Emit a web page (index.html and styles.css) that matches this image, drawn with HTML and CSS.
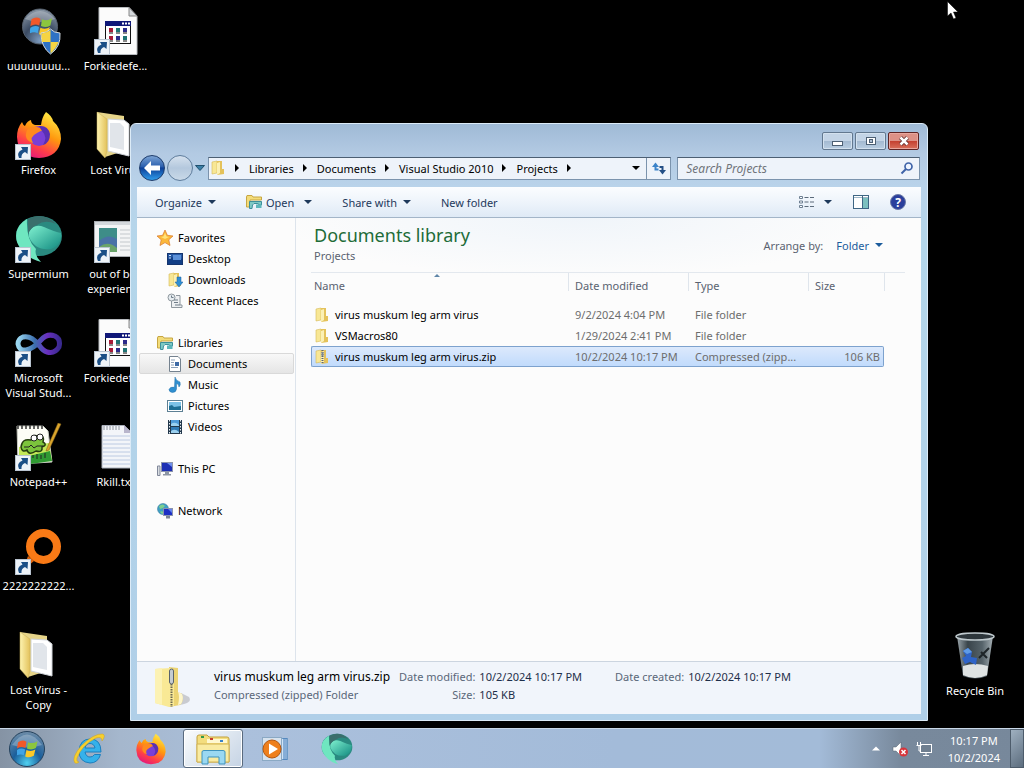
FILE: index.html
```html
<!DOCTYPE html>
<html lang="en">
<head>
    <meta charset="UTF-8">
    <meta name="viewport" content="width=device-width, initial-scale=1.0">
    <title>Documents library</title>
    <link rel="stylesheet" href="styles.css">
</head>
<body>
    <!-- shared icons -->
    <svg class="defs" width="0" height="0" aria-hidden="true">
        <defs>
            <linearGradient id="gFolder" x1="0" y1="0" x2="1" y2="0">
                <stop offset="0" stop-color="#fdf3b0"/>
                <stop offset="1" stop-color="#e3c25c"/>
            </linearGradient>
            <linearGradient id="gFox" x1="0.8" y1="0" x2="0.3" y2="1">
                <stop offset="0" stop-color="#fff14a"/>
                <stop offset="0.45" stop-color="#ff980e"/>
                <stop offset="0.75" stop-color="#ff3f48"/>
                <stop offset="1" stop-color="#e3167e"/>
            </linearGradient>
            <radialGradient id="gOrb" cx="0.5" cy="0.9" r="0.9">
                <stop offset="0" stop-color="#4fd0f0"/>
                <stop offset="0.45" stop-color="#1a5f9c"/>
                <stop offset="1" stop-color="#6f8da8"/>
            </radialGradient>
            <radialGradient id="gOrbGrey" cx="0.5" cy="0.9" r="0.9">
                <stop offset="0" stop-color="#7d9cc0"/>
                <stop offset="0.5" stop-color="#3a4a62"/>
                <stop offset="1" stop-color="#8b98a6"/>
            </radialGradient>
            <linearGradient id="gTeal" x1="0" y1="0" x2="1" y2="1">
                <stop offset="0" stop-color="#7ff0cf"/>
                <stop offset="1" stop-color="#128a80"/>
            </linearGradient>
            <linearGradient id="gInf" x1="0" y1="0" x2="1" y2="0">
                <stop offset="0" stop-color="#9ad7f0"/>
                <stop offset="0.4" stop-color="#3c6fae"/>
                <stop offset="0.7" stop-color="#6a2fc0"/>
                <stop offset="1" stop-color="#3a2a90"/>
            </linearGradient>
            <linearGradient id="gBin" x1="0" y1="0" x2="1" y2="0">
                <stop offset="0" stop-color="#9aa5ab"/>
                <stop offset="0.3" stop-color="#39444a"/>
                <stop offset="0.7" stop-color="#56636a"/>
                <stop offset="1" stop-color="#a6b0b5"/>
            </linearGradient>
        </defs>
        <symbol id="i-flag" viewBox="0 0 20 18">
            <path d="M1 3 Q5 0 9 2.500 L8 8.500 Q4 6.500 0 9Z" fill="#f0582a"/>
            <path d="M10.500 3 Q15 5 19.500 2 L18 8.500 Q14 11 9.500 9Z" fill="#8cc63e"/>
            <path d="M0 10.500 Q4 8 7.800 10 L6.500 15.500 Q3 13.500 -1 16Z" fill="#3fa4e6"/>
            <path d="M9 10.500 Q13.500 12.500 17.500 10 L16 16 Q12 18.500 7.800 16.500Z" fill="#fbc927"/>
        </symbol>
        <symbol id="i-shortcut" viewBox="0 0 16 16">
            <rect x="0.500" y="0.500" width="15" height="15" fill="#eef3f8" stroke="#b9c4d0"/>
            <path d="M4 14 Q1 8 7.500 5.500 L6 3 L13 3 L12.500 10 L10 8 Q6 9.500 6.500 14Z" fill="#1b4f86"/>
        </symbol>
        <symbol id="i-uac" viewBox="0 0 48 48">
            <circle cx="25" cy="19.500" r="17.500" fill="url(#gOrbGrey)" stroke="#56616e"/>
            <path d="M10 12 Q25 -4 40 12 Q25 18 10 12Z" fill="#fff" opacity="0.250"/>
            <use href="#i-flag" x="15" y="9" width="23" height="20"/>
            <path d="M26 26 Q32 26 35.500 22 Q39 26 45 26 Q46 40 35.500 47 Q26 40 26 26Z" fill="#2f72c4" stroke="#d5dce2"/>
            <path d="M35.500 23 V35 H27 Q26 30 26.500 26.500 Q32 26 35.500 23Z M35.500 35 H43.500 Q41 42 35.500 46.500Z" fill="#f6d443"/>
        </symbol>
        <symbol id="i-batch" viewBox="0 0 48 48">
            <path d="M7 0.500 H37 L45 9 V47.500 H7Z" fill="#fbfbfb" stroke="#b9bcc0"/>
            <path d="M37 0.500 V9 H45Z" fill="#d5d9dd" stroke="#888"/>
            <rect x="13.500" y="14.500" width="25" height="22" fill="#fff" stroke="#111"/>
            <rect x="13" y="14" width="26" height="5" fill="#101878"/>
            <path d="M30 15.500h2v2h-2zM33 15.500h2v2h-2zM36 15.500h2v2h-2z" fill="#fff"/>
            <path d="M17 21h4v4h-4zM17 29h4v4h-4z" fill="#a81c38"/>
            <path d="M24 21h4v4h-4zM31 29h4v4h-4z" fill="#1f7474"/>
            <path d="M31 21h4v4h-4zM24 29h4v4h-4z" fill="#2b2b8a"/>
            <path d="M17 26h4M24 26h4M31 26h4M17 34h4M24 34h4M31 34h4" stroke="#111"/>
        </symbol>
        <symbol id="i-firefox" viewBox="0 0 48 48">
            <path d="M31 1 Q37 5 38 10 Q46 17 46 28 Q44 46 24 47 Q3 46 2 26 Q2 17 7 11 Q8 14 10 15 Q12 10 16 9 Q16 13 20 14 L26 14 Q27 6 31 1Z" fill="url(#gFox)"/>
            <circle cx="24" cy="25" r="10" fill="#7a3fd6"/>
            <path d="M12 19 Q17 13 25 17 L29 19 Q25 20 22 22 Q14 26 18 32 Q8 29 12 19Z" fill="#ff8a1e"/>
            <path d="M24 15 Q33 14 35 23 Q35 32 28 34 Q33 26 27 20Z" fill="#5a2fb4"/>
        </symbol>
        <symbol id="i-openfolder" viewBox="0 0 48 48">
            <path d="M5 1 L32 5 V40 L13 46Z" fill="#e6d489"/>
            <path d="M16 8 L32 9 L37 13 V45 L16 40Z" fill="#fff" stroke="#cfd3d8"/>
            <path d="M18 12 L28 12 L32 16 V39 L18 36Z" fill="#e1e5ea"/>
            <path d="M5 1 L15 8 V40 L13 47 L5 38Z" fill="url(#gFolder)" stroke="#c9b158" stroke-width="0.500"/>
        </symbol>
        <symbol id="i-teal" viewBox="0 0 48 48">
            <ellipse cx="24" cy="21" rx="23" ry="20" fill="#2a8a80"/>
            <path d="M12 4 Q-2 12 2 27 Q8 42 26 47 Q19 40 21 34 Q11 25 12 4Z" fill="#6fe6c0"/>
            <path d="M14 17 Q19 8 29 12 Q40 17 46 18 Q47 30 36 34 Q20 36 14 22Z" fill="url(#gTeal)"/>
            <path d="M13 4 Q28 -4 41 9 Q30 4 22 10 Q16 12 13 19Z" fill="#3a6e6c"/>
        </symbol>
        <symbol id="i-oobe" viewBox="0 0 48 48">
            <rect x="2.500" y="6.500" width="44" height="35" fill="#f3f4f5" stroke="#a9adb2"/>
            <rect x="3" y="7" width="43" height="3" fill="#d4d8dc"/>
            <rect x="7" y="13" width="18" height="24" fill="#3e8d88"/>
            <path d="M7 26 Q16 18 25 24 V37 H7Z" fill="#4a72a6"/>
            <path d="M7 32 Q16 25 25 33 V37 H7Z" fill="#6aa36a"/>
            <path d="M28 15h16M28 19h16M28 23h16M28 27h16M28 31h16M28 35h16" stroke="#c3c8cc"/>
        </symbol>
        <symbol id="i-infinity" viewBox="0 0 48 48">
            <path d="M24 26 Q16 16 8 18 Q3 20 3 25 Q4 32 11 31 Q18 30 26 21 Q32 14 40 17 Q46 20 44 28 Q40 35 32 33 Q28 32 24 26Z" fill="none" stroke="url(#gInf)" stroke-width="5"/>
        </symbol>
        <symbol id="i-npp" viewBox="0 0 48 48">
            <path d="M2 3 L28 3 L33 8 L37 39 L3 41Z" fill="#fdfdf6" stroke="#c9ccc2"/>
            <path d="M4 24 L34 20 L37 38 L4 40Z" fill="#c4e858"/>
            <path d="M14 33 L35 28 L37 38 L15 41Z" fill="#2f9a32"/>
            <path d="M3 2v4M7 2v4M11 2v4M15 2v4M19 2v4M23 2v4M27 2v4" stroke="#333" stroke-width="1.500"/>
            <path d="M6 24 Q7 15 16 17 Q19 10 24 14 Q30 12 28 19 Q33 22 27 24 Q28 30 21 28 Q14 33 12 27 Q7 30 6 24Z" fill="#7cc43c" stroke="#253c10" stroke-width="1.500"/>
            <circle cx="19" cy="15" r="3" fill="#fff" stroke="#222"/>
            <circle cx="25" cy="14" r="3" fill="#fff" stroke="#222"/>
            <path d="M9 24h5l2-2 3 3 3-2h6M18 35v-3M22 36v-5M26 36v-4M30 35v-5" stroke="#222" fill="none"/>
            <path d="M43 0 L46 1 L34 27 L31 28 L32 25Z" fill="#d9a42c" stroke="#7a5a18" stroke-width="0.500"/>
        </symbol>
        <symbol id="i-text" viewBox="0 0 48 48">
            <path d="M10 2.500 H32 L40 10 V45 H10Z" fill="#f3f5f9" stroke="#aab0bb"/>
            <path d="M32 2 V10 H40Z" fill="#b9b6cc"/>
            <path d="M12 3v4M15 3v4M18 3v4M21 3v4M24 3v4M27 3v4" stroke="#8c929c"/>
            <path d="M11 13h28M11 17h28M11 21h28M11 25h28M11 29h28M11 33h28M11 37h28M11 41h28" stroke="#bccae2"/>
        </symbol>
        <symbol id="i-openshell" viewBox="0 0 48 48">
            <path d="M13 29 L19 34 L8 43Z" fill="#e0640e"/>
            <circle cx="28.500" cy="19.500" r="13.500" fill="none" stroke="#f97a16" stroke-width="8"/>
        </symbol>
        <symbol id="i-bin" viewBox="0 0 48 48">
            <path d="M6 4 H42 L36 44 Q24 49 12 44Z" fill="url(#gBin)"/>
            <path d="M12 34 Q24 30 37 34 L36 43 Q24 49 12 43Z" fill="#dfe3e3"/>
            <path d="M12 19 L17 16 L21 20 L20 25 L26 26 L25 33 L19 30 L14 32 L11 26 L15 24Z" fill="#2f64c8"/>
            <path d="M12 19 L17 16 L21 20 L16 22Z" fill="#5f9be6"/>
            <path d="M38 16 L28 26 M30 20 L36 26" stroke="#1d2428" stroke-width="2"/>
            <ellipse cx="24" cy="4.500" rx="19" ry="3.500" fill="#2d363b" stroke="#bfc9cd" stroke-width="1.500"/>
        </symbol>
        <symbol id="i-folder" viewBox="0 0 16 16">
            <path d="M2 2 L7 1 V13 L2 14Z" fill="#f8e795" stroke="#d5b855" stroke-width="0.600"/>
            <path d="M7 1 H12 V9 H14 V14 L7 15Z" fill="#e4c25b"/>
            <path d="M7 3 L10 2 V13 L7 15Z" fill="#fbf0b4"/>
        </symbol>
        <symbol id="i-zip" viewBox="0 0 16 16">
            <use href="#i-folder"/>
            <path d="M8.500 1V15" stroke="#5c6670" stroke-width="2" stroke-dasharray="1 1"/>
            <rect x="7.500" y="3" width="2" height="4" fill="#7d8790"/>
        </symbol>
        <symbol id="i-library" viewBox="0 0 16 16">
            <path d="M0.500 3 V13 H4 V6 H15.500 V3 H7 L6 1.500 H1Z" fill="#f3dc7a" stroke="#c7a642"/>
            <path d="M3.500 7.500 H15.500 V11 H13 Q13 9.500 11 9.500 H8 Q6 10 6 14.500 H3.500Z" fill="#7ec9c4" stroke="#3d8f9b"/>
            <path d="M10 10.500h5.500v3.500h-5.500z" fill="#5db6bb"/>
        </symbol>
        <symbol id="i-monitor" viewBox="0 0 16 16">
            <rect x="4.500" y="1.500" width="11" height="9" fill="#1c2fb4" stroke="#8b93ad"/>
            <path d="M10 2 H15 V6Z" fill="#7090ec"/>
            <path d="M8 11h4v2h2v1.500H6V13h2z" fill="#8d96a4"/>
            <path d="M0.500 5 H3 V14.500 H0.500Z" fill="#d9dde2" stroke="#81889a"/>
        </symbol>
    </svg>

    <main class="desktop">
        <nav class="shortcuts" aria-label="Desktop">
            <a class="shortcut" href="#"><svg class="pic"><use href="#i-uac"/></svg><span>uuuuuuuu...</span></a>
            <a class="shortcut" href="#"><svg class="pic"><use href="#i-firefox"/><use href="#i-shortcut" x="0" y="33" width="16" height="16"/></svg><span>Firefox</span></a>
            <a class="shortcut" href="#"><svg class="pic"><use href="#i-teal"/><use href="#i-shortcut" x="0" y="32" width="16" height="16"/></svg><span>Supermium</span></a>
            <a class="shortcut" href="#"><svg class="pic"><use href="#i-infinity"/><use href="#i-shortcut" x="0" y="32" width="16" height="16"/></svg><span>Microsoft Visual Stud...</span></a>
            <a class="shortcut" href="#"><svg class="pic"><use href="#i-npp"/><use href="#i-shortcut" x="0" y="32" width="16" height="16"/></svg><span>Notepad++</span></a>
            <a class="shortcut" href="#"><svg class="pic"><use href="#i-openshell"/><use href="#i-shortcut" x="0" y="32" width="16" height="16"/></svg><span>2222222222...</span></a>
            <a class="shortcut" href="#"><svg class="pic"><use href="#i-openfolder"/></svg><span>Lost Virus - Copy</span></a>
            <a class="shortcut" href="#"><svg class="pic"><use href="#i-batch"/><use href="#i-shortcut" x="2" y="32" width="16" height="16"/></svg><span>Forkiedefe...</span></a>
            <a class="shortcut" href="#"><svg class="pic"><use href="#i-openfolder"/></svg><span>Lost Virus</span></a>
            <a class="shortcut" href="#"><svg class="pic"><use href="#i-oobe"/><use href="#i-shortcut" x="2" y="32" width="16" height="16"/></svg><span>out of box experience</span></a>
            <a class="shortcut" href="#"><svg class="pic"><use href="#i-batch"/><use href="#i-shortcut" x="2" y="32" width="16" height="16"/></svg><span>Forkiedefe...</span></a>
            <a class="shortcut" href="#"><svg class="pic"><use href="#i-text"/></svg><span>Rkill.txt</span></a>
        </nav>
        <a class="shortcut recycle" href="#"><svg class="pic"><use href="#i-bin"/></svg><span>Recycle Bin</span></a>

        <section class="window" aria-label="Projects">
            <header class="caption">
                <button class="cap" aria-label="Minimize"><svg width="14" height="12"><rect x="1.500" y="6.500" width="10" height="4" fill="#fff" stroke="#4d6074"/></svg></button>
                <button class="cap" aria-label="Maximize"><svg width="14" height="12"><rect x="2.500" y="2.500" width="9" height="7" fill="#fff" stroke="#4d6074"/><rect x="5.500" y="4.500" width="3" height="3" fill="#aebfd2" stroke="#4d6074"/></svg></button>
                <button class="cap close" aria-label="Close"><svg width="14" height="12"><path d="M3.500 2.500 L10.500 9.500 M10.500 2.500 L3.500 9.500" stroke="#5b2a2a" stroke-width="4"/><path d="M3.500 2.500 L10.500 9.500 M10.500 2.500 L3.500 9.500" stroke="#fff" stroke-width="2.500"/></svg></button>
            </header>

            <div class="navbar">
                <div class="history">
                    <button class="round back" aria-label="Back"><svg width="16" height="14"><path d="M0 7 L7 0 V4.500 H16 V9.500 H7 V14Z" fill="#fff"/></svg></button>
                    <button class="round forward" aria-label="Forward"></button>
                    <button class="recent" aria-label="Recent pages"><svg width="10" height="6"><path d="M0.500 0.500H9.500L5 5.500Z" fill="#3b7fa6" stroke="#20506f"/></svg></button>
                </div>
                <div class="address">
                    <svg class="small"><use href="#i-folder"/></svg>
                    <i class="chev"></i><button>Libraries</button>
                    <i class="chev"></i><button>Documents</button>
                    <i class="chev"></i><button>Visual Studio 2010</button>
                    <i class="chev"></i><button>Projects</button>
                    <i class="chev"></i>
                    <button class="drop" aria-label="Previous locations"><i class="caret"></i></button>
                    <button class="refresh" aria-label="Refresh"><svg width="14" height="14"><path d="M3.500 5 V8.500 H6.500" fill="none" stroke="#3b83c9" stroke-width="2"/><path d="M0 6 L3.500 1.500 L7 6Z" fill="#3b83c9"/><path d="M7.500 6 H10.500 V9.500" fill="none" stroke="#244f86" stroke-width="2"/><path d="M7 9 L10.500 13.500 L14 9Z" fill="#244f86"/></svg></button>
                </div>
                <label class="search">
                    <input type="text" placeholder="Search Projects" aria-label="Search Projects">
                    <svg width="14" height="14"><circle cx="8.500" cy="5.500" r="3.500" fill="#eef4ff" stroke="#3f63a8" stroke-width="1.700"/><path d="M6 8 L1.500 12.500" stroke="#3f63a8" stroke-width="2"/></svg>
                </label>
            </div>

            <div class="client">
                <div class="toolbar">
                    <button>Organize<i class="caret"></i></button>
                    <button><svg class="small"><use href="#i-library"/></svg>Open<i class="caret wide"></i></button>
                    <button>Share with<i class="caret"></i></button>
                    <button>New folder</button>
                    <div class="tools">
                        <button aria-label="Change your view"><svg width="16" height="14"><path d="M1.500 1.500h3v2h-3zM1.500 6h3v2h-3zM1.500 10.500h3v2h-3z" fill="#fff" stroke="#6d7f92"/><path d="M6.500 2.500h4M12 2.500h4M6.500 7h4M12 7h4M6.500 11.500h4M12 11.500h4" stroke="#5c6b7b"/></svg><i class="caret wide"></i></button>
                        <button aria-label="Preview pane"><svg width="16" height="14"><rect x="0.500" y="0.500" width="15" height="13" fill="#fff" stroke="#3f6684"/><path d="M1 2.500h14" stroke="#9fb7c8"/><rect x="10" y="3" width="5" height="10" fill="#7cc0bf"/><path d="M9.500 1v12" stroke="#3f6684"/></svg></button>
                        <button class="help" aria-label="Help">?</button>
                    </div>
                </div>

                <div class="panes">
                    <nav class="tree" aria-label="Navigation pane">
                        <ul>
                            <li><a class="top" href="#"><svg class="small"><path d="M8 0 L10.400 5.300 L16 6 L11.800 9.800 L13 15.500 L8 12.600 L3 15.500 L4.200 9.800 L0 6 L5.600 5.300Z" fill="#fbb83a" stroke="#d9772b" stroke-width="0.700"/><path d="M8 3 L9.500 6.500 L12 7 L8 9 L4 7 L6.500 6.500Z" fill="#ffe27a"/></svg>Favorites</a></li>
                            <li><a href="#"><svg class="small"><rect x="0.500" y="2.500" width="15" height="11" fill="#2659a5" stroke="#15356e"/><path d="M1 8 Q8 4 15 8 V13 H1Z" fill="#123f86"/><rect x="6" y="4" width="8" height="5" fill="#5b90d8"/><path d="M2 4.500h2M2 7h2" stroke="#cfe3fa"/></svg>Desktop</a></li>
                            <li><a href="#"><svg class="small"><use href="#i-folder"/><path d="M10 5h4v5h2l-4 5-4-5h2z" fill="#2f8fd4" stroke="#1d5f9d" stroke-width="0.500"/></svg>Downloads</a></li>
                            <li><a href="#"><svg class="small"><path d="M4.500 4 V14.500 H15 V12 H13 V2.500 H9" fill="#eef0f2" stroke="#8e979e"/><circle cx="4.500" cy="4.500" r="3.500" fill="#e6ecf0" stroke="#8e979e"/><path d="M4.500 2.500v2h2M7 7h4M7 9.500h4M8 12h5" stroke="#6f7c88" fill="none"/></svg>Recent Places</a></li>
                        </ul>
                        <ul>
                            <li><a class="top" href="#"><svg class="small"><use href="#i-library"/></svg>Libraries</a></li>
                            <li><a class="current" href="#"><svg class="small"><path d="M2.500 0.500 H11 L13.500 3 V15.500 H2.500Z" fill="#fff" stroke="#75828f"/><path d="M4 4h4M4 6.500h3M4 9h3M4 11.500h7" stroke="#8ba0b8"/><rect x="8" y="6" width="4" height="4" fill="#3e6aa5"/></svg>Documents</a></li>
                            <li><a href="#"><svg class="small"><path d="M8 0 Q9 4 13 5 Q14 8 12 10 Q12 7 9.500 6.500 V12 Q9 15.500 5.500 15.500 Q2 15 2 12.500 Q3 9.500 7.500 10.200Z" fill="#2f8fd0" stroke="#2270a8" stroke-width="0.500"/></svg>Music</a></li>
                            <li><a href="#"><svg class="small"><rect x="0.500" y="2.500" width="15" height="11" fill="#fff" stroke="#5d8094"/><rect x="2" y="4" width="12" height="8" fill="#7dc2e6"/><path d="M2 8 L5 7 L7 9 L14 8 V12 H2Z" fill="#1f6f94"/></svg>Pictures</a></li>
                            <li><a href="#"><svg class="small"><rect x="1" y="1" width="14" height="14" fill="#22384c"/><rect x="4" y="1" width="8" height="6" fill="#4e9ad8"/><rect x="4" y="8" width="8" height="6" fill="#2f79b4"/><path d="M4 5 Q8 2 12 6 V7 H4ZM4 12 Q8 9 12 13 V14 H4Z" fill="#9bd0ef"/><path d="M2.500 1v14M13.500 1v14" stroke="#e9f1f6" stroke-dasharray="1.500 1.500"/></svg>Videos</a></li>
                        </ul>
                        <ul>
                            <li><a class="top" href="#"><svg class="small"><use href="#i-monitor"/></svg>This PC</a></li>
                        </ul>
                        <ul>
                            <li><a class="top" href="#"><svg class="small"><circle cx="6" cy="6" r="5.500" fill="#3f9fc4" stroke="#2b7194" stroke-width="0.500"/><path d="M2 3 Q6 0 8 3 Q6 6 3 6Z M3 9 Q5 7 7 10 L5 11Z" fill="#7ed08e"/><rect x="6.500" y="5.500" width="9" height="7" fill="#1c2fc4" stroke="#8b93ad"/><path d="M11 6 H15 V10Z" fill="#6484ee"/><path d="M9 13h4v2.500H9z" fill="#7c8594"/></svg>Network</a></li>
                        </ul>
                    </nav>

                    <div class="content">
                        <div class="library">
                            <div>
                                <h1>Documents library</h1>
                                <p>Projects</p>
                            </div>
                            <div class="arrange">Arrange by: <button>Folder<i class="caret"></i></button></div>
                        </div>
                        <div class="list">
                            <table>
                                <colgroup><col class="c-name"><col class="c-date"><col class="c-type"><col class="c-size"><col></colgroup>
                                <thead>
                                    <tr><th class="sorted">Name</th><th>Date modified</th><th>Type</th><th>Size</th><th></th></tr>
                                </thead>
                                <tbody>
                                    <tr><td class="name"><svg class="small"><use href="#i-folder"/></svg>virus muskum leg arm virus</td><td>9/2/2024 4:04 PM</td><td>File folder</td><td></td></tr>
                                    <tr><td class="name"><svg class="small"><use href="#i-folder"/></svg>VSMacros80</td><td>1/29/2024 2:41 PM</td><td>File folder</td><td></td></tr>
                                    <tr class="selected"><td class="name"><svg class="small"><use href="#i-zip"/></svg>virus muskum leg arm virus.zip</td><td>10/2/2024 10:17 PM</td><td>Compressed (zipp...</td><td class="size">106 KB</td></tr>
                                </tbody>
                            </table>
                        </div>
                    </div>
                </div>

                <footer class="details">
                    <svg class="bigzip" viewBox="0 0 40 44">
                        <path d="M26 40 Q40 38 36 32 L28 28Z" fill="#c9cbd0"/>
                        <path d="M16 2 L25 3 V27 L29 29 Q31 37 27 40 L16 42Z" fill="#ecd473"/>
                        <path d="M25 27 Q27 31 25 40 L28 39 Q31 34 29 29Z" fill="#fdf6cc"/>
                        <path d="M2 4 L18 3 Q21 5 21 9 V41 L16 42 L2 38Z" fill="#f9e995"/>
                        <path d="M2 4 L9 3 V40 L2 38Z" fill="#fcf2b4"/>
                        <path d="M18.500 4V42" stroke="#6d6a55" stroke-width="2" stroke-dasharray="1.500 1"/>
                        <rect x="16.500" y="4" width="4" height="15" rx="2" fill="#c5ccd2" stroke="#59636c"/>
                    </svg>
                    <div class="file">
                        <strong>virus muskum leg arm virus.zip</strong>
                        <span>Compressed (zipped) Folder</span>
                    </div>
                    <dl>
                        <dt>Date modified:</dt><dd>10/2/2024 10:17 PM</dd>
                        <dt>Size:</dt><dd>105 KB</dd>
                    </dl>
                    <dl>
                        <dt>Date created:</dt><dd>10/2/2024 10:17 PM</dd>
                    </dl>
                </footer>
            </div>
        </section>
    </main>

    <footer class="taskbar">
        <button class="start" aria-label="Start"><svg width="38" height="38" viewBox="0 0 38 38"><circle cx="19" cy="19" r="17.500" fill="url(#gOrb)" stroke="#24415c"/><path d="M4 15 Q19 -6 34 15 Q19 20 4 15Z" fill="#fff" opacity="0.250"/><use href="#i-flag" x="9" y="9" width="21" height="19"/></svg></button>
        <button class="task" aria-label="Internet Explorer"><svg width="34" height="34" viewBox="0 0 34 34"><path d="M29 20 H13 Q14 25 18 25 Q21 25 22.500 22.500 H28.500 Q26 31 18 31 Q7 30 7 19 Q8 7 18 7 Q29 7 29 20Z M13 16 H23 Q22 11.500 18 11.500 Q14 11.500 13 16Z" fill="#35b1ea" fill-rule="evenodd" stroke="#1c7fbe"/><path d="M3 31 Q-1 26 9 14 Q22 1 31 2 Q34 4 30 9 Q30 4 24 6 Q10 13 5 26 Q4 30 7 30 Q5 32 3 31Z" fill="#f7cf2d" stroke="#cfa31c" stroke-width="0.500"/></svg></button>
        <button class="task" aria-label="Firefox"><svg width="32" height="32"><use href="#i-firefox"/></svg></button>
        <button class="task active" aria-label="Windows Explorer"><svg width="36" height="32" viewBox="0 0 36 32"><path d="M2 4 Q2 2 4 2 H12 L14 4 H32 Q34 4 34 6 V29 H2Z" fill="#f3dd7e" stroke="#c3a13d"/><path d="M12 6 H32 V10 H12Z" fill="#fff8d0"/><path d="M6 4h3" stroke="#2f9a4a" stroke-width="2"/><path d="M15 6h3" stroke="#c53c2a" stroke-width="2"/><path d="M25 8h3" stroke="#3b82c8" stroke-width="2"/><path d="M2 11 H34 V29 H2Z" fill="#f9ebA2" stroke="#d2b352"/><path d="M7 19 Q7 17.500 9 17.500 H28 Q30 17.500 30 19 V31 H24 V24 H13 V31 H7Z" fill="#9ad8f2" stroke="#3f93bd"/></svg></button>
        <button class="task" aria-label="Media Player"><svg width="26" height="26" viewBox="0 0 26 26"><rect x="4.500" y="2.500" width="21" height="21" fill="#cfe3f5" stroke="#6c9ac6"/><path d="M22 2v22M24 2v22" stroke="#3f79b8"/><rect x="0.500" y="1.500" width="19" height="23" fill="#d6e2ee" stroke="#8ba9c4"/><circle cx="10" cy="13" r="9" fill="#ee7f1c" stroke="#b3560f"/><path d="M7 7.500 L16 13 L7 18.500Z" fill="#fff"/></svg></button>
        <button class="task" aria-label="Supermium"><svg width="32" height="32"><use href="#i-teal"/></svg></button>

        <div class="tray">
            <button class="more" aria-label="Show hidden icons"><svg width="8" height="5"><path d="M0 4.500 L4 0.500 L8 4.500Z" fill="#fff"/></svg></button>
            <button aria-label="Volume"><svg width="16" height="16"><path d="M1 6h3l5-5v14l-5-5H1z" fill="#fff" stroke="#56626e" stroke-width="0.500"/><circle cx="11.500" cy="11" r="4.500" fill="#d7353b"/><path d="M9.500 9l4 4M13.500 9l-4 4" stroke="#fff" stroke-width="1.500"/></svg></button>
            <button aria-label="Network"><svg width="16" height="16"><rect x="4.500" y="3.500" width="11" height="8" fill="#6f7f90" stroke="#fff"/><path d="M7 14.500h6M10 12v2M1.500 1v4M4.500 1v4M0.500 4.500h5M3 5v5h2" stroke="#fff" fill="none"/></svg></button>
            <time class="clock"><span>10:17 PM</span><span>10/2/2024</span></time>
            <button class="peek" aria-label="Show desktop"></button>
        </div>
    </footer>

    <svg class="cursor" width="12" height="19"><path d="M0.500 0.500 V15 L4 12 L6.500 18 L9 17 L6.500 11 H11Z" fill="#fff" stroke="#000" stroke-width="0.500"/></svg>
</body>
</html>
```

FILE: styles.css
```css
* {
    box-sizing: border-box;
}
body {
    margin: 0;
    height: 100vh;
    display: flex;
    flex-direction: column;
    overflow: hidden;
    background: #000;
    font-family: 'Noto Sans', 'Open Sans', sans-serif;
    font-size: 11px;
    line-height: 15px;
    color: #000;
}
button {
    font: inherit;
    color: inherit;
    background: none;
    border: none;
    padding: 0;
    display: flex;
    align-items: center;
    white-space: nowrap;
}
a {
    color: inherit;
    text-decoration: none;
}
ul, dl, dd, p, h1 {
    margin: 0;
    padding: 0;
}
ul {
    list-style: none;
}
svg {
    flex: none;
}
.defs {
    position: absolute;
}
.small {
    width: 16px;
    height: 16px;
}
.caret {
    border: 4px solid transparent;
    border-top-color: currentColor;
    border-bottom: none;
    margin-left: 6px;
}
.caret.wide {
    margin-left: 10px;
}

/* desktop */
.desktop {
    flex: 1;
    position: relative;
    min-height: 0;
}
.shortcuts {
    display: grid;
    grid-auto-flow: column;
    grid-template-rows: repeat(7, 104px);
    grid-auto-columns: 77px;
    justify-content: start;
    padding-top: 7px;
}
.shortcut {
    display: flex;
    flex-direction: column;
    align-items: center;
    gap: 3px;
    color: #fff;
    text-align: center;
}
.shortcut span {
    max-width: 72px;
    text-shadow: 0 1px 2px #000;
}
.pic {
    width: 48px;
    height: 48px;
    overflow: visible;
}
.recycle {
    position: absolute;
    right: 10px;
    bottom: 30px;
    width: 78px;
}
.cursor {
    position: absolute;
    left: 947px;
    top: 1px;
}

/* explorer window */
.window {
    position: absolute;
    left: 130px;
    right: 96px;
    top: 123px;
    bottom: 7px;
    display: flex;
    flex-direction: column;
    padding: 0 6px 6px;
    border: 1px solid #dcebf7;
    border-radius: 6px 6px 0 0;
    background: linear-gradient(#9fbad6, #b3cae3 30px, #b9d3ea 62px, #b4d6ea 120px, #b0cfe8);
}
.caption {
    display: flex;
    justify-content: flex-end;
    gap: 2px;
    padding: 8px 2px 5px;
}
.cap {
    width: 31px;
    height: 18px;
    justify-content: center;
    border: 1px solid #62788f;
    border-radius: 2px;
    background: linear-gradient(#c3d4e6 50%, #a3b9d0 50%, #b9cee2);
    box-shadow: inset 0 0 0 1px #d3e1ee;
}
.cap.close {
    border-color: #5e2424;
    background: linear-gradient(#dd9186 50%, #c33f2f 50%, #d9705c);
    box-shadow: inset 0 0 0 1px #e8a79e;
}
.navbar {
    display: flex;
    align-items: center;
    height: 26px;
    margin-bottom: 6px;
    padding-right: 1px;
}
.history {
    display: flex;
    align-items: center;
    gap: 2px;
    padding: 0 3px 0 2px;
}
.round {
    width: 26px;
    height: 26px;
    justify-content: center;
    border-radius: 50%;
    border: 1px solid #5f7d9c;
}
.back {
    border-color: #1d3c6c;
    background: linear-gradient(#7ba3d4, #2a5fae 45%, #0c3f98 50%, #2f9bea);
}
.forward {
    background: linear-gradient(#d5e1ee, #b4c8dd 50%, #c9d9e8);
}
.address {
    flex: 1;
    display: flex;
    align-items: center;
    height: 23px;
    padding-left: 1px;
    border: 1px solid #7b93ad;
    border-top-color: #4c5f73;
    background: #eef3fa;
}
.chev {
    border: 4px solid transparent;
    border-left-color: #000;
    border-right: none;
    margin: 0 10px 0 9px;
}
.drop {
    margin-left: auto;
    padding-right: 6px;
}
.refresh {
    width: 24px;
    height: 21px;
    justify-content: center;
    border-left: 1px solid #7b93ad;
}
.search {
    display: flex;
    align-items: center;
    width: 31%;
    height: 23px;
    margin-left: 6px;
    padding: 0 5px 0 8px;
    border: 1px solid #7b93ad;
    border-top-color: #4c5f73;
    background: #eef3fa;
}
.search input {
    flex: 1;
    min-width: 0;
    padding: 0;
    border: none;
    outline: none;
    background: none;
    font: inherit;
    font-size: 12px;
}
.search input::placeholder {
    color: #70747a;
    font-style: italic;
}
.client {
    flex: 1;
    display: flex;
    flex-direction: column;
    min-height: 0;
    background: #fcfcfc;
}
.toolbar {
    display: flex;
    align-items: center;
    height: 31px;
    padding: 0 15px 0 18px;
    gap: 30px;
    color: #1e395b;
    background: linear-gradient(#fbfdff, #eef4fb 50%, #dfeaf6);
    border-bottom: 1px solid #a3b5c8;
}
.toolbar .small {
    margin-right: 4px;
}
.tools {
    display: flex;
    align-items: center;
    gap: 21px;
    margin-left: auto;
}
.help {
    width: 16px;
    height: 16px;
    justify-content: center;
    border-radius: 50%;
    border: 1px solid #6d7ba8;
    background: #2b3f9c;
    color: #fff;
    font-size: 12px;
    font-weight: bold;
}
.panes {
    flex: 1;
    display: flex;
    min-height: 0;
}
.tree {
    width: 159px;
    flex: none;
    display: flex;
    flex-direction: column;
    gap: 21px;
    padding: 9px 1px 0 2px;
    border-right: 1px solid #dde4ec;
}
.tree a {
    display: flex;
    align-items: center;
    gap: 5px;
    height: 21px;
    padding-left: 27px;
    border: 1px solid transparent;
}
.tree .top {
    padding-left: 17px;
}
.tree .current {
    border-color: #d9d9d9;
    border-radius: 2px;
    background: linear-gradient(#f8f8f8, #e5e5e5);
}
.content {
    flex: 1;
    min-width: 0;
    padding: 5px 16px 0 15px;
    background: radial-gradient(300px 60px at 45% 0, #f0f5fa, #fcfcfc);
}
.library {
    display: flex;
    justify-content: space-between;
    padding: 0 22px 0 3px;
    height: 49px;
    color: #5a6270;
}
.library h1 {
    font-size: 18px;
    line-height: 25px;
    font-weight: normal;
    color: #1e6c38;
}
.arrange {
    display: flex;
    align-items: center;
    gap: 13px;
    padding-bottom: 5px;
}
.arrange button {
    color: #1c5c9c;
}
table {
    width: 100%;
    table-layout: fixed;
    border-collapse: separate;
    border-spacing: 0;
    color: #6d6d6d;
}
.c-name {
    width: 257px;
}
.c-date, .c-type {
    width: 120px;
}
.c-size {
    width: 76px;
}
th {
    height: 32px;
    padding: 0 7px 6px;
    font-weight: normal;
    text-align: left;
    color: #5a6270;
    border-top: 1px solid #e3e8ee;
    background: linear-gradient(#dfe5ec, #dfe5ec) left top / 1px 18px no-repeat;
}
th:first-child {
    padding-left: 3px;
    background: none;
}
.sorted {
    position: relative;
}
.sorted::after {
    content: '';
    position: absolute;
    left: 48%;
    top: 1px;
    border: 3px solid transparent;
    border-bottom-color: #5f86a8;
    border-top: none;
}
td {
    height: 21px;
    padding: 0 3px 0 7px;
    white-space: nowrap;
    border: solid transparent;
    border-width: 1px 0;
}
.name {
    color: #000;
    padding-left: 3px;
}
.name .small {
    margin-right: 5px;
    vertical-align: -4px;
}
.size {
    text-align: right;
}
.selected td {
    border-color: #7da2ce;
    background: linear-gradient(#dce9fc, #c1dbfc);
}
.selected .name {
    border-left-width: 1px;
    padding-left: 2px;
    border-radius: 2px 0 0 2px;
}
.selected .size {
    border-right-width: 1px;
    border-radius: 0 2px 2px 0;
}
.details {
    display: flex;
    align-items: flex-start;
    height: 53px;
    padding: 3px 16px;
    border-top: 1px solid #ccd5e0;
    background: #f1f5fb;
    color: #5a6779;
    line-height: 18px;
}
.bigzip {
    width: 40px;
    height: 44px;
    margin-right: 21px;
}
.details .file, .details dl {
    padding-top: 3px;
}
.file strong, .file span {
    display: block;
    font-weight: normal;
}
.file strong {
    font-size: 12px;
    color: #000;
}
.details dl {
    display: grid;
    grid-template-columns: auto auto;
    column-gap: 4px;
    margin-left: 9px;
}
.details dl + dl {
    margin-left: 33px;
}
.details dt {
    text-align: right;
}
.details dd {
    color: #1e2f4a;
}

/* taskbar */
.taskbar {
    flex: none;
    display: flex;
    gap: 2px;
    height: 40px;
    border-top: 1px solid #c9d8e8;
    background: linear-gradient(90deg, #8593a4, #a5b7cd 120px, #abc0dc 240px, #a3bbd9 60%, #a3bbd8 80%, #78899c 88%, #77889b);
}
.start {
    width: 57px;
    padding-left: 8px;
}
.task {
    width: 60px;
    justify-content: center;
}
.active {
    border: 1px solid #596a7e;
    border-radius: 3px;
    background: linear-gradient(135deg, #fafcfd, #c5d3e4);
    box-shadow: inset 0 0 0 1px #fff;
}
.tray {
    margin-left: auto;
    display: flex;
    align-items: center;
    gap: 8px;
    color: #fff;
}
.more {
    margin-right: 4px;
}
.clock {
    display: flex;
    flex-direction: column;
    padding: 0 2px 0 8px;
    line-height: 17px;
    text-align: center;
}
.peek {
    width: 14px;
    height: 39px;
    border: 1px solid #4d5c6b;
    background: linear-gradient(135deg, #9fb0c0, #5c6d7e);
}
```
